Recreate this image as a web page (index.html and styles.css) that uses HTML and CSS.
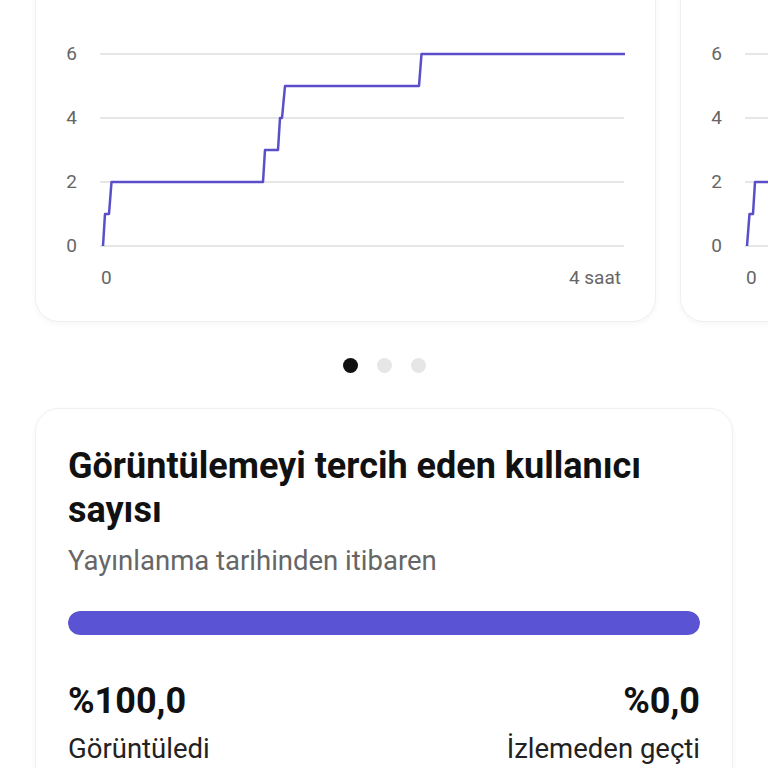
FILE: index.html
```html
<!DOCTYPE html>
<html lang="tr">
<head>
    <meta charset="UTF-8">
    <meta name="viewport" content="width=device-width, initial-scale=1.0">
    <title>İstatistikler</title>
    <link rel="stylesheet" href="styles.css">
</head>
<body>
    <div class="page">
        <div class="carousel">
            <div class="card chart-card">
                <svg class="chart" width="576" height="270" viewBox="0 0 576 270">
                    <g class="grid">
                        <line x1="41" y1="24" x2="565" y2="24"/>
                        <line x1="41" y1="88" x2="565" y2="88"/>
                        <line x1="41" y1="152" x2="565" y2="152"/>
                        <line x1="41" y1="216" x2="565" y2="216"/>
                    </g>
                    <g class="labels">
                        <text x="18" y="30" text-anchor="end">6</text>
                        <text x="18" y="94" text-anchor="end">4</text>
                        <text x="18" y="158" text-anchor="end">2</text>
                        <text x="18" y="222" text-anchor="end">0</text>
                        <text x="42" y="254">0</text>
                        <text x="562" y="254" text-anchor="end">4 saat</text>
                    </g>
                    <polyline class="line" points="44,216 46,184 50,184 52.5,152 204,152 206,120 219,120 221,88 223,88 226,56 360,56 362.5,24 566,24"/>
                </svg>
            </div>
            <div class="card chart-card">
                <svg class="chart" width="576" height="270" viewBox="0 0 576 270">
                    <g class="grid">
                        <line x1="41" y1="24" x2="565" y2="24"/>
                        <line x1="41" y1="88" x2="565" y2="88"/>
                        <line x1="41" y1="152" x2="565" y2="152"/>
                        <line x1="41" y1="216" x2="565" y2="216"/>
                    </g>
                    <g class="labels">
                        <text x="18" y="30" text-anchor="end">6</text>
                        <text x="18" y="94" text-anchor="end">4</text>
                        <text x="18" y="158" text-anchor="end">2</text>
                        <text x="18" y="222" text-anchor="end">0</text>
                        <text x="42" y="254">0</text>
                        <text x="562" y="254" text-anchor="end">4 saat</text>
                    </g>
                    <polyline class="line" points="43,216 45.5,184 49,184 51,152 300,152 302,120 330,120 332,88 500,88"/>
                </svg>
            </div>
        </div>

        <div class="dots">
            <span class="dot active"></span>
            <span class="dot"></span>
            <span class="dot"></span>
        </div>

        <div class="card stats-card">
            <h2>Görüntülemeyi tercih eden kullanıcı sayısı</h2>
            <p class="sub">Yayınlanma tarihinden itibaren</p>
            <div class="bar"><div class="bar-fill" style="width: 100%;"></div></div>
            <div class="stats">
                <div class="stat">
                    <div class="value">%100,0</div>
                    <div class="label">Görüntüledi</div>
                </div>
                <div class="stat right">
                    <div class="value">%0,0</div>
                    <div class="label">İzlemeden geçti</div>
                </div>
            </div>
        </div>
    </div>
</body>
</html>
```

FILE: styles.css
```css
body {
    margin: 0;
    font-family: Roboto, "Noto Sans", sans-serif;
    background: #ffffff;
    color: #111;
    overflow: hidden;
}
.page {
    margin-top: -30px;
    padding: 0 35px;
}
.card {
    background: #fff;
    border: 1px solid #f0f0f0;
    border-radius: 24px;
    box-shadow: 0 2px 6px rgba(0, 0, 0, 0.04);
    box-sizing: border-box;
}
.carousel {
    display: flex;
    gap: 24px;
}
.chart-card {
    flex: 0 0 621px;
    padding: 59px 0 21px 23px;
}
.chart {
    display: block;
}
.grid line {
    stroke: #e6e6e6;
    stroke-width: 2;
}
.labels text {
    font-family: Roboto, sans-serif;
    font-size: 19px;
    fill: #666;
}
.line {
    fill: none;
    stroke: #5a4fc8;
    stroke-width: 2.5;
    stroke-linejoin: round;
}
.dots {
    display: flex;
    justify-content: center;
    gap: 19px;
    margin: 36px 0 35px;
}
.dot {
    width: 15px;
    height: 15px;
    border-radius: 50%;
    background: #e6e6e6;
}
.dot.active {
    background: #111;
}
.stats-card {
    padding: 35px 32px 40px;
}
h2 {
    margin: 0;
    font-size: 36px;
    line-height: 44px;
    font-weight: 700;
    color: #111;
}
.sub {
    margin: 12px 0 0;
    font-size: 27.5px;
    line-height: 34px;
    color: #666;
}
.bar {
    margin-top: 33px;
    height: 24px;
    border-radius: 12px;
    background: #e6e6e6;
    overflow: hidden;
}
.bar-fill {
    height: 100%;
    background: #5a54d4;
    border-radius: 12px;
}
.stats {
    display: flex;
    justify-content: space-between;
    margin-top: 45px;
}
.stat.right {
    text-align: right;
}
.value {
    font-size: 36px;
    line-height: 42px;
    font-weight: 700;
    color: #111;
}
.label {
    margin-top: 10px;
    font-size: 27.5px;
    line-height: 34px;
    color: #222;
}
```
